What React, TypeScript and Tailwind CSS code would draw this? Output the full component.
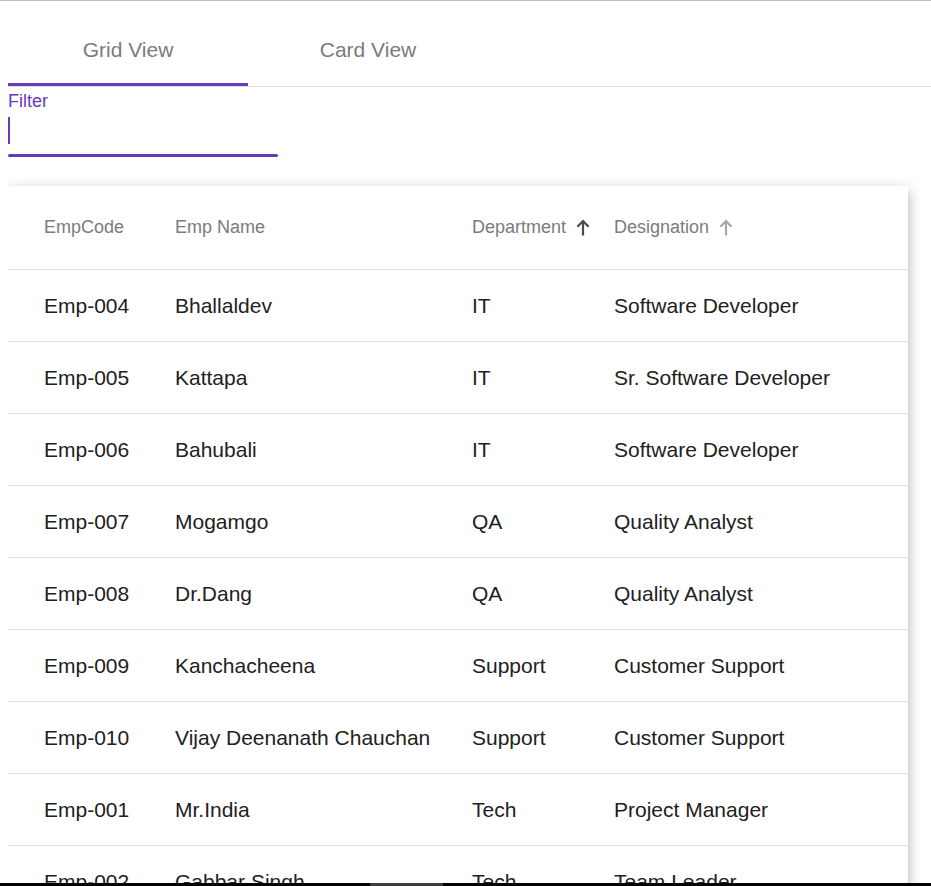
import React from "react"

const rows = [
  ["Emp-004", "Bhallaldev", "IT", "Software Developer"],
  ["Emp-005", "Kattapa", "IT", "Sr. Software Developer"],
  ["Emp-006", "Bahubali", "IT", "Software Developer"],
  ["Emp-007", "Mogamgo", "QA", "Quality Analyst"],
  ["Emp-008", "Dr.Dang", "QA", "Quality Analyst"],
  ["Emp-009", "Kanchacheena", "Support", "Customer Support"],
  ["Emp-010", "Vijay Deenanath Chauchan", "Support", "Customer Support"],
  ["Emp-001", "Mr.India", "Tech", "Project Manager"],
  ["Emp-002", "Gabbar Singh", "Tech", "Team Leader"],
]

function SortArrow({ active }: { active?: boolean }) {
  return (
    <svg
      width="14"
      height="17"
      viewBox="0 0 14 17"
      className={active ? "text-[#4a4a4a]" : "text-[#a8a8a8]"}
      fill="currentColor"
    >
      <path d="M7 0.5 L0.6 6.9 L2.2 8.5 L5.9 4.8 L5.9 16.5 L8.1 16.5 L8.1 4.8 L11.8 8.5 L13.4 6.9 Z" />
    </svg>
  )
}

export default function App() {
  return (
    <div
      className="relative h-[886px] overflow-hidden bg-white border-t border-[#bdbdbd]"
      style={{ fontFamily: '"Liberation Sans", Arial, sans-serif' }}
    >
      {/* tabs */}
      <div className="ml-2 mt-[13px] flex border-b-[1.5px] border-[#e0e0e0]">
        <div className="relative flex h-[72px] w-[240px] items-center justify-center text-[21px] text-[#7b7b7b]">
          Grid View
          <div className="absolute bottom-0 left-0 h-[3px] w-full bg-[#673ab7]" />
        </div>
        <div className="flex h-[72px] w-[240px] items-center justify-center text-[21px] text-[#7b7b7b]">
          Card View
        </div>
      </div>

      {/* filter */}
      <div className="ml-2 w-[270px]">
        <div className="pt-[3px] text-[18px] leading-[22px] text-[#673ab7]">Filter</div>
        <div className="h-[42px] pt-[5px]">
          <div className="h-[27px] w-[2px] bg-[#673ab7]" />
        </div>
        <div className="h-[3px] rounded-full bg-[#673ab7]" />
      </div>

      {/* table */}
      <div className="ml-2 overflow-hidden pt-[29px] pr-[23px] pb-10">
        <div className="w-[900px] bg-white shadow-[0_5px_5px_-3px_rgba(0,0,0,0.2),0_8px_10px_1px_rgba(0,0,0,0.14),0_3px_14px_2px_rgba(0,0,0,0.12)]">
          <div className="grid h-[84px] grid-cols-[131px_297px_142px_1fr] items-center border-b-[1.5px] border-[#e0e0e0] pl-[36px] text-[18px] text-[#7b7b7b]">
            <div>EmpCode</div>
            <div>Emp Name</div>
            <div className="flex items-center gap-[10px]">
              Department <SortArrow active />
            </div>
            <div className="flex items-center gap-[10px]">
              Designation <SortArrow />
            </div>
          </div>
          {rows.map((r) => (
            <div
              key={r[0]}
              className="grid h-[72px] grid-cols-[131px_297px_142px_1fr] items-center border-b-[1.5px] border-[#e0e0e0] pl-[36px] text-[21px] text-[#212121]"
            >
              <div>{r[0]}</div>
              <div>{r[1]}</div>
              <div>{r[2]}</div>
              <div>{r[3]}</div>
            </div>
          ))}
        </div>
      </div>

      {/* bottom scrollbar strip */}
      <div className="absolute bottom-0 left-0 h-[3px] w-full bg-black">
        <div className="absolute left-[370px] top-0 h-full w-[73px] bg-[#3c3c3c]" />
      </div>
    </div>
  )
}
